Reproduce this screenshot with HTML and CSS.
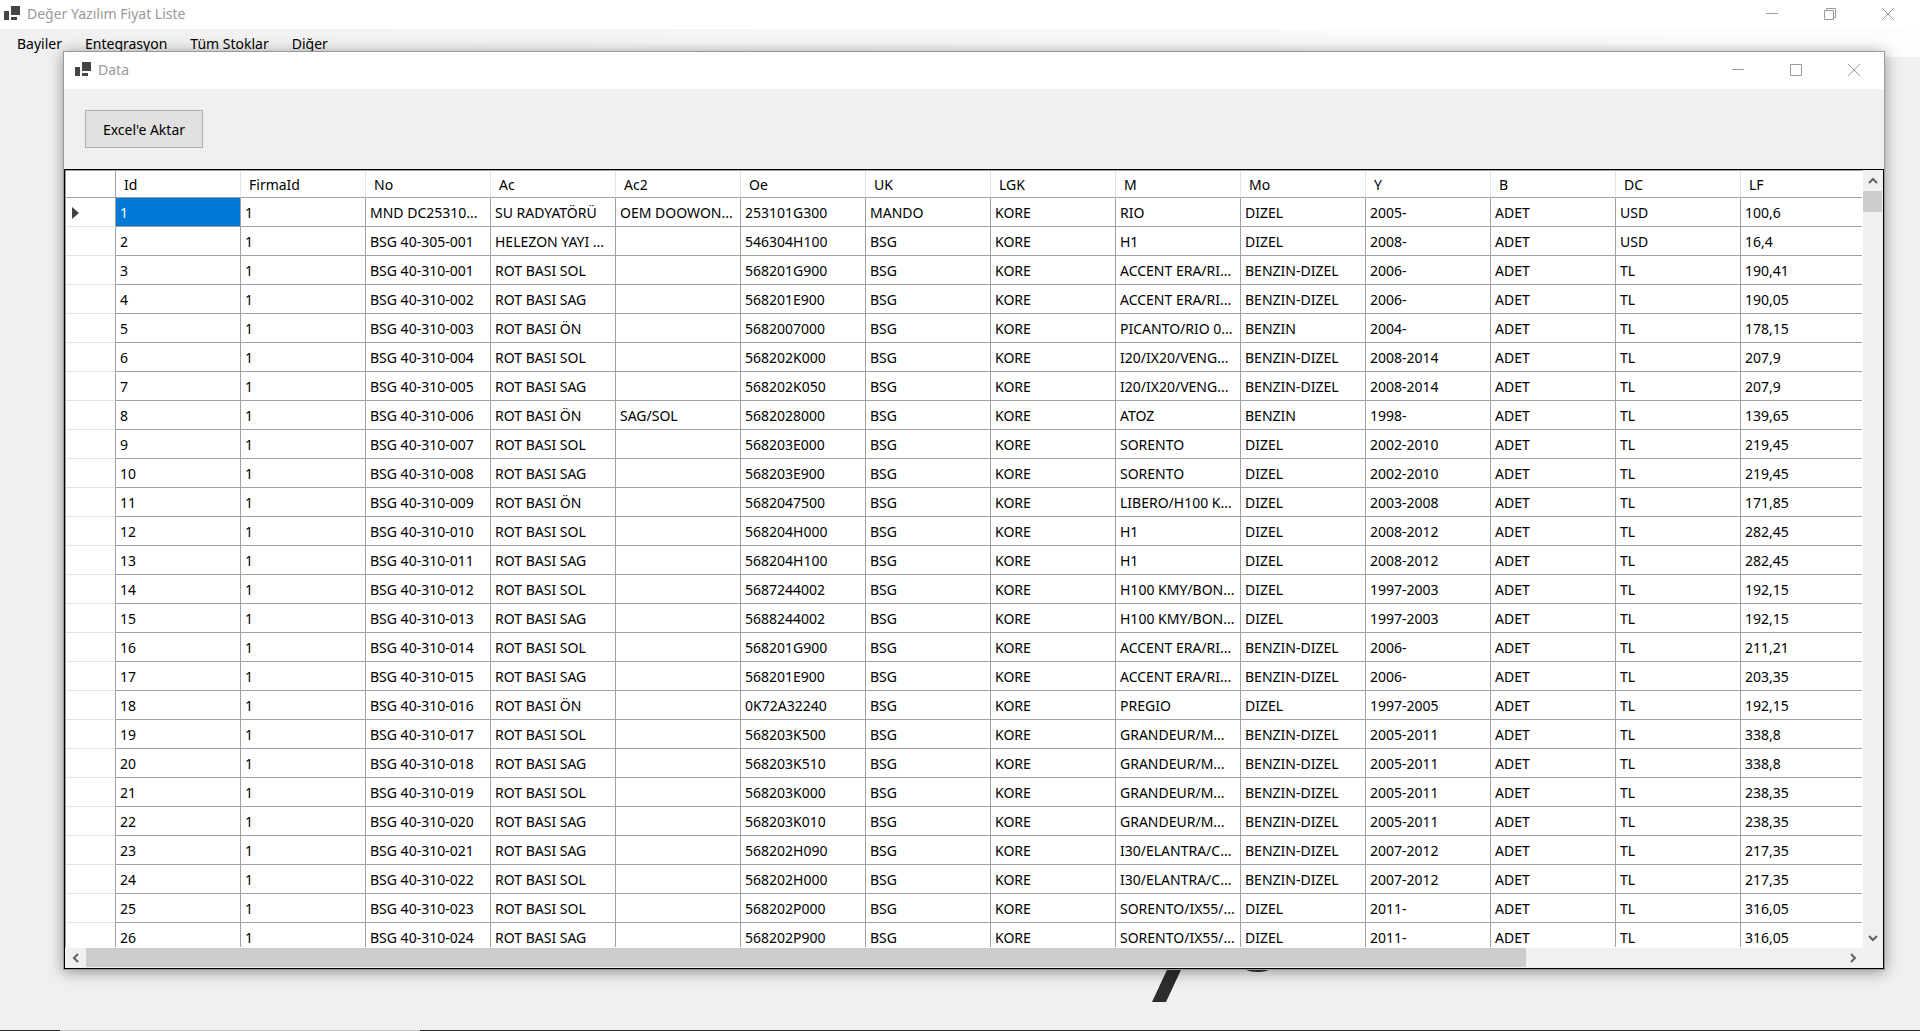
FILE: index.html
```html
<!DOCTYPE html>
<html lang="tr">
<head>
<meta charset="utf-8">
<title>Değer Yazılım Fiyat Liste</title>
<link rel="stylesheet" href="styles.css">
</head>
<body>
<div class="app">
  <header class="titlebar">
    <svg class="app-icon" viewBox="0 0 16 16" aria-hidden="true"><path d="M7 0h9v9H7zM0 5h5v9H0zM7 11h6v3H7z"/></svg>
    <h1 class="title">Değer Yazılım Fiyat Liste</h1>
    <div class="controls">
      <button type="button" aria-label="Simge durumuna küçült"><svg viewBox="0 0 12 12"><path d="M0 5.5h12"/></svg></button>
      <button type="button" aria-label="Önceki boyut"><svg viewBox="0 0 12 12"><path d="M.5 2.5h9v9h-9zM2.5 2.5v-2h9v9h-2"/></svg></button>
      <button type="button" aria-label="Kapat"><svg viewBox="0 0 12 12"><path d="M0 0l12 12M12 0L0 12"/></svg></button>
    </div>
  </header>
  <nav class="menu">
    <button type="button">Bayiler</button>
    <button type="button">Entegrasyon</button>
    <button type="button">Tüm Stoklar</button>
    <button type="button">Diğer</button>
  </nav>
  <main class="workspace">
    <svg class="logo" viewBox="0 0 120 60" aria-hidden="true"><path d="M28 0h14L14 60H0z"/><ellipse cx="106" cy="19" rx="20" ry="11"/></svg>
  </main>
  <div class="taskbar"><div class="task"></div></div>

  <section class="window" aria-labelledby="data-title">
    <header class="titlebar window-bar">
      <svg class="app-icon" viewBox="0 0 16 16" aria-hidden="true"><path d="M7 0h9v9H7zM0 5h5v9H0zM7 11h6v3H7z"/></svg>
      <h2 class="title" id="data-title">Data</h2>
      <div class="controls">
        <button type="button" aria-label="Simge durumuna küçült"><svg viewBox="0 0 12 12"><path d="M0 5.5h12"/></svg></button>
        <button type="button" aria-label="Ekranı kapla"><svg viewBox="0 0 12 12"><path d="M.5.5h11v11H.5z"/></svg></button>
        <button type="button" aria-label="Kapat"><svg viewBox="0 0 12 12"><path d="M0 0l12 12M12 0L0 12"/></svg></button>
      </div>
    </header>
    <div class="tools"><button type="button" class="export">Excel'e Aktar</button></div>
    <div class="grid">
      <div class="view">
        <table>
          <colgroup><col class="marker-col"><col span="14"></colgroup>
          <thead>
            <tr><th><th>Id<th>FirmaId<th>No<th>Ac<th>Ac2<th>Oe<th>UK<th>LGK<th>M<th>Mo<th>Y<th>B<th>DC<th>LF</tr>
          </thead>
          <tbody>
            <tr><th><svg class="marker" viewBox="0 0 7 12"><path d="M0 0l7 6-7 6z"/></svg><td class="selected">1<td>1<td>MND DC25310...<td>SU RADYATÖRÜ<td>OEM DOOWON...<td>253101G300<td>MANDO<td>KORE<td>RIO<td>DIZEL<td>2005-<td>ADET<td>USD<td>100,6</tr>
            <tr><th><td>2<td>1<td>BSG 40-305-001<td>HELEZON YAYI ...<td><td>546304H100<td>BSG<td>KORE<td>H1<td>DIZEL<td>2008-<td>ADET<td>USD<td>16,4</tr>
            <tr><th><td>3<td>1<td>BSG 40-310-001<td>ROT BASI SOL<td><td>568201G900<td>BSG<td>KORE<td>ACCENT ERA/RI...<td>BENZIN-DIZEL<td>2006-<td>ADET<td>TL<td>190,41</tr>
            <tr><th><td>4<td>1<td>BSG 40-310-002<td>ROT BASI SAG<td><td>568201E900<td>BSG<td>KORE<td>ACCENT ERA/RI...<td>BENZIN-DIZEL<td>2006-<td>ADET<td>TL<td>190,05</tr>
            <tr><th><td>5<td>1<td>BSG 40-310-003<td>ROT BASI ÖN<td><td>5682007000<td>BSG<td>KORE<td>PICANTO/RIO 0...<td>BENZIN<td>2004-<td>ADET<td>TL<td>178,15</tr>
            <tr><th><td>6<td>1<td>BSG 40-310-004<td>ROT BASI SOL<td><td>568202K000<td>BSG<td>KORE<td>I20/IX20/VENG...<td>BENZIN-DIZEL<td>2008-2014<td>ADET<td>TL<td>207,9</tr>
            <tr><th><td>7<td>1<td>BSG 40-310-005<td>ROT BASI SAG<td><td>568202K050<td>BSG<td>KORE<td>I20/IX20/VENG...<td>BENZIN-DIZEL<td>2008-2014<td>ADET<td>TL<td>207,9</tr>
            <tr><th><td>8<td>1<td>BSG 40-310-006<td>ROT BASI ÖN<td>SAG/SOL<td>5682028000<td>BSG<td>KORE<td>ATOZ<td>BENZIN<td>1998-<td>ADET<td>TL<td>139,65</tr>
            <tr><th><td>9<td>1<td>BSG 40-310-007<td>ROT BASI SOL<td><td>568203E000<td>BSG<td>KORE<td>SORENTO<td>DIZEL<td>2002-2010<td>ADET<td>TL<td>219,45</tr>
            <tr><th><td>10<td>1<td>BSG 40-310-008<td>ROT BASI SAG<td><td>568203E900<td>BSG<td>KORE<td>SORENTO<td>DIZEL<td>2002-2010<td>ADET<td>TL<td>219,45</tr>
            <tr><th><td>11<td>1<td>BSG 40-310-009<td>ROT BASI ÖN<td><td>5682047500<td>BSG<td>KORE<td>LIBERO/H100 K...<td>DIZEL<td>2003-2008<td>ADET<td>TL<td>171,85</tr>
            <tr><th><td>12<td>1<td>BSG 40-310-010<td>ROT BASI SOL<td><td>568204H000<td>BSG<td>KORE<td>H1<td>DIZEL<td>2008-2012<td>ADET<td>TL<td>282,45</tr>
            <tr><th><td>13<td>1<td>BSG 40-310-011<td>ROT BASI SAG<td><td>568204H100<td>BSG<td>KORE<td>H1<td>DIZEL<td>2008-2012<td>ADET<td>TL<td>282,45</tr>
            <tr><th><td>14<td>1<td>BSG 40-310-012<td>ROT BASI SOL<td><td>5687244002<td>BSG<td>KORE<td>H100 KMY/BON...<td>DIZEL<td>1997-2003<td>ADET<td>TL<td>192,15</tr>
            <tr><th><td>15<td>1<td>BSG 40-310-013<td>ROT BASI SAG<td><td>5688244002<td>BSG<td>KORE<td>H100 KMY/BON...<td>DIZEL<td>1997-2003<td>ADET<td>TL<td>192,15</tr>
            <tr><th><td>16<td>1<td>BSG 40-310-014<td>ROT BASI SOL<td><td>568201G900<td>BSG<td>KORE<td>ACCENT ERA/RI...<td>BENZIN-DIZEL<td>2006-<td>ADET<td>TL<td>211,21</tr>
            <tr><th><td>17<td>1<td>BSG 40-310-015<td>ROT BASI SAG<td><td>568201E900<td>BSG<td>KORE<td>ACCENT ERA/RI...<td>BENZIN-DIZEL<td>2006-<td>ADET<td>TL<td>203,35</tr>
            <tr><th><td>18<td>1<td>BSG 40-310-016<td>ROT BASI ÖN<td><td>0K72A32240<td>BSG<td>KORE<td>PREGIO<td>DIZEL<td>1997-2005<td>ADET<td>TL<td>192,15</tr>
            <tr><th><td>19<td>1<td>BSG 40-310-017<td>ROT BASI SOL<td><td>568203K500<td>BSG<td>KORE<td>GRANDEUR/M...<td>BENZIN-DIZEL<td>2005-2011<td>ADET<td>TL<td>338,8</tr>
            <tr><th><td>20<td>1<td>BSG 40-310-018<td>ROT BASI SAG<td><td>568203K510<td>BSG<td>KORE<td>GRANDEUR/M...<td>BENZIN-DIZEL<td>2005-2011<td>ADET<td>TL<td>338,8</tr>
            <tr><th><td>21<td>1<td>BSG 40-310-019<td>ROT BASI SOL<td><td>568203K000<td>BSG<td>KORE<td>GRANDEUR/M...<td>BENZIN-DIZEL<td>2005-2011<td>ADET<td>TL<td>238,35</tr>
            <tr><th><td>22<td>1<td>BSG 40-310-020<td>ROT BASI SAG<td><td>568203K010<td>BSG<td>KORE<td>GRANDEUR/M...<td>BENZIN-DIZEL<td>2005-2011<td>ADET<td>TL<td>238,35</tr>
            <tr><th><td>23<td>1<td>BSG 40-310-021<td>ROT BASI SAG<td><td>568202H090<td>BSG<td>KORE<td>I30/ELANTRA/C...<td>BENZIN-DIZEL<td>2007-2012<td>ADET<td>TL<td>217,35</tr>
            <tr><th><td>24<td>1<td>BSG 40-310-022<td>ROT BASI SOL<td><td>568202H000<td>BSG<td>KORE<td>I30/ELANTRA/C...<td>BENZIN-DIZEL<td>2007-2012<td>ADET<td>TL<td>217,35</tr>
            <tr><th><td>25<td>1<td>BSG 40-310-023<td>ROT BASI SOL<td><td>568202P000<td>BSG<td>KORE<td>SORENTO/IX55/...<td>DIZEL<td>2011-<td>ADET<td>TL<td>316,05</tr>
            <tr><th><td>26<td>1<td>BSG 40-310-024<td>ROT BASI SAG<td><td>568202P900<td>BSG<td>KORE<td>SORENTO/IX55/...<td>DIZEL<td>2011-<td>ADET<td>TL<td>316,05</tr>
          </tbody>
        </table>
      </div>
      <div class="scroll scroll-y">
        <button type="button" aria-label="Yukarı"><svg viewBox="0 0 10 10"><path d="M1 7l4-4 4 4"/></svg></button>
        <div class="track"><div class="thumb"></div></div>
        <button type="button" aria-label="Aşağı"><svg viewBox="0 0 10 10"><path d="M1 3l4 4 4-4"/></svg></button>
      </div>
      <div class="scroll scroll-x">
        <button type="button" aria-label="Sola"><svg viewBox="0 0 10 10"><path d="M7 1L3 5l4 4"/></svg></button>
        <div class="track"><div class="thumb"></div></div>
        <button type="button" aria-label="Sağa"><svg viewBox="0 0 10 10"><path d="M3 1l4 4-4 4"/></svg></button>
      </div>
    </div>
  </section>
</div>
</body>
</html>
```
FILE: styles.css
```css
* { box-sizing: border-box; }

body {
  margin: 0;
  background: #f0f0f0;
  color: #000;
  font: 14px/20px "Noto Sans", "Open Sans", sans-serif;
}

button {
  margin: 0;
  padding: 0;
  border: 0;
  background: none;
  color: inherit;
  font: inherit;
}

svg { display: block; flex: none; }

.app {
  position: relative;
  display: flex;
  flex-direction: column;
  height: 100vh;
  overflow: hidden;
}

/* Title bars */
.titlebar {
  display: flex;
  align-items: center;
  gap: 7px;
  height: 29px;
  flex: none;
  padding: 0 0 1px 4px;
  background: #fff;
  color: #999;
}

.title { margin: 0; font-size: 14px; font-weight: 400; }

.app-icon { width: 16px; height: 16px; fill: #444; }

.controls { display: flex; margin-left: auto; padding-right: 3px; }

.controls button {
  display: grid;
  place-items: center;
  width: 58px;
  height: 28px;
}

.controls svg {
  width: 12px;
  height: 12px;
  fill: none;
  stroke: #999;
}

/* Menu strip */
.menu {
  display: flex;
  flex: none;
  height: 28px;
  padding: 1px 11px 0;
  gap: 11px;
  background: linear-gradient(to right, #f0f0f0, #fdfdfd);
}

.menu button { padding: 0 6px; }

.workspace { flex: 1; display: flex; align-items: flex-end; padding: 0 0 28px 60%; }

.logo { width: 120px; height: 60px; fill: #2d2d2d; }

.taskbar { flex: none; height: 1px; padding-left: 60px; background: #2a2a24; }
.task { width: 360px; height: 1px; background: #c4c4c4; }

/* Data window, floating over the workspace */
.window {
  position: absolute;
  inset: 51px 35px 61px 63px;
  display: flex;
  flex-direction: column;
  border: 1px solid #999;
  background: #f0f0f0;
  box-shadow: 0 2px 14px rgba(0, 0, 0, .4);
}

.window-bar { height: 37px; padding-left: 11px; }
.window-bar .controls { padding-right: 1px; }

.tools { flex: none; padding: 21px; height: 80px; }

.export {
  width: 118px;
  height: 38px;
  padding-top: 1px;
  border: 1px solid #adadad;
  background: #e1e1e1;
}

/* Data grid */
.grid {
  flex: 1;
  min-height: 0;
  display: grid;
  grid-template-columns: minmax(0, 1fr) 20px;
  grid-template-rows: minmax(0, 1fr) 20px;
  border: 1px solid #000;
}

.view {
  overflow: hidden;
  border: solid #a0a0a0;
  border-width: 1px 0 0 1px;
  background: #fff;
  border-right: 1px solid #fff;
  border-bottom: 1px solid #fff;
}

table {
  width: 1800px;
  table-layout: fixed;
  border-collapse: separate;
  border-spacing: 0;
}

col { width: 125px; }
.marker-col { width: 50px; }

th, td {
  height: 29px;
  padding: 2px 0 0 4px;
  border: solid #a0a0a0;
  border-width: 0 1px 1px 0;
  font-weight: 400;
  text-align: left;
  white-space: nowrap;
  overflow: hidden;
}

thead th {
  height: 27px;
  padding-left: 8px;
  border-right-color: #e3e3e3;
}

thead th:first-child { border-right-color: #a0a0a0; }
tbody th { border-bottom-color: #e3e3e3; }

.selected { background: #0078d7; color: #fff; }

.marker { width: 7px; height: 12px; margin-left: 2px; fill: #444; }

/* Scroll bars */
.scroll { display: flex; background: #f0f0f0; }
.scroll-y { flex-direction: column; padding-right: 1px; }
.scroll-x { grid-column: 1 / -1; padding: 0 20px 1px 0; }

.scroll button { display: grid; place-items: center; flex: none; width: 21px; }
.scroll-y button { width: 19px; height: 21px; }

.scroll svg { width: 10px; height: 10px; fill: none; stroke: #606060; stroke-width: 2; }

.track { flex: 1; display: flex; }
.scroll-y .thumb { width: 100%; height: 21px; background: #cdcdcd; }
.scroll-x .thumb { width: 82%; background: #cdcdcd; }
```
